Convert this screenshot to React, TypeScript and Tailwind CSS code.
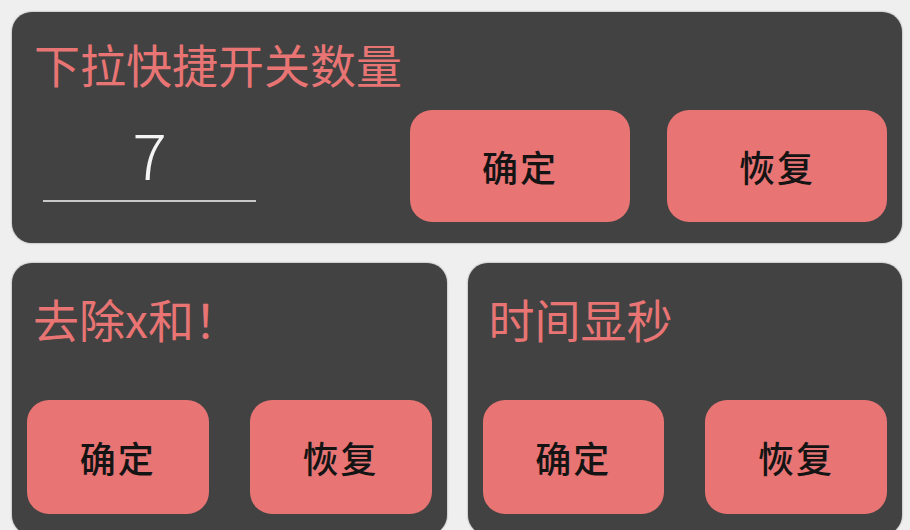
import React from "react";

const FONT = { fontFamily: '"Noto Sans CJK SC", "Noto Sans", sans-serif' };

function ActionButton({ label, className = "" }: { label: string; className?: string }) {
  return (
    <button
      className={`flex items-center justify-center bg-[#e87474] text-[36px] font-medium leading-none tracking-[2px] text-[#141414] ${className}`}
    >
      {label}
    </button>
  );
}

function ToggleCard({ title }: { title: string }) {
  return (
    <div className="flex h-[272px] flex-col rounded-[20px] bg-[#424242] pt-[32px] pb-[21px] shadow-[0_0_2px_rgba(0,0,0,0.45)]">
      <div className="pl-[21px] text-[46px] font-normal leading-[46px] text-[#e87474]">{title}</div>
      <div className="mt-[59px] flex gap-[41px] px-[15px]">
        <ActionButton label="确定" className="h-[114px] flex-1 rounded-[22px]" />
        <ActionButton label="恢复" className="h-[114px] flex-1 rounded-[22px]" />
      </div>
    </div>
  );
}

export default function App() {
  return (
    <div style={FONT} className="h-[530px] overflow-hidden bg-[#efefef] pt-[12px] pl-[12px] pr-[8px]">
      {/* Quick settings count */}
      <div className="h-[231px] rounded-[20px] bg-[#424242] pt-[28px] pl-[22px] pr-[15px] shadow-[0_0_2px_rgba(0,0,0,0.45)]">
        <div className="text-[46px] font-normal leading-[46px] text-[#e87474]">下拉快捷开关数量</div>
        <div className="mt-[24px] flex items-start">
          <div className="ml-[9px] mt-[7px] w-[213px] border-b-2 border-[#c8c8c8] pb-[13px] text-center text-[64px] font-light leading-[70px] text-[#f4f4f4]">
            7
          </div>
          <div className="ml-auto flex gap-[37px]">
            <ActionButton label="确定" className="h-[112px] w-[220px] rounded-[22px]" />
            <ActionButton label="恢复" className="h-[112px] w-[220px] rounded-[22px]" />
          </div>
        </div>
      </div>

      <div className="mt-[20px] grid grid-cols-2 gap-[21px]">
        <ToggleCard title="去除x和！" />
        <ToggleCard title="时间显秒" />
      </div>
    </div>
  );
}
